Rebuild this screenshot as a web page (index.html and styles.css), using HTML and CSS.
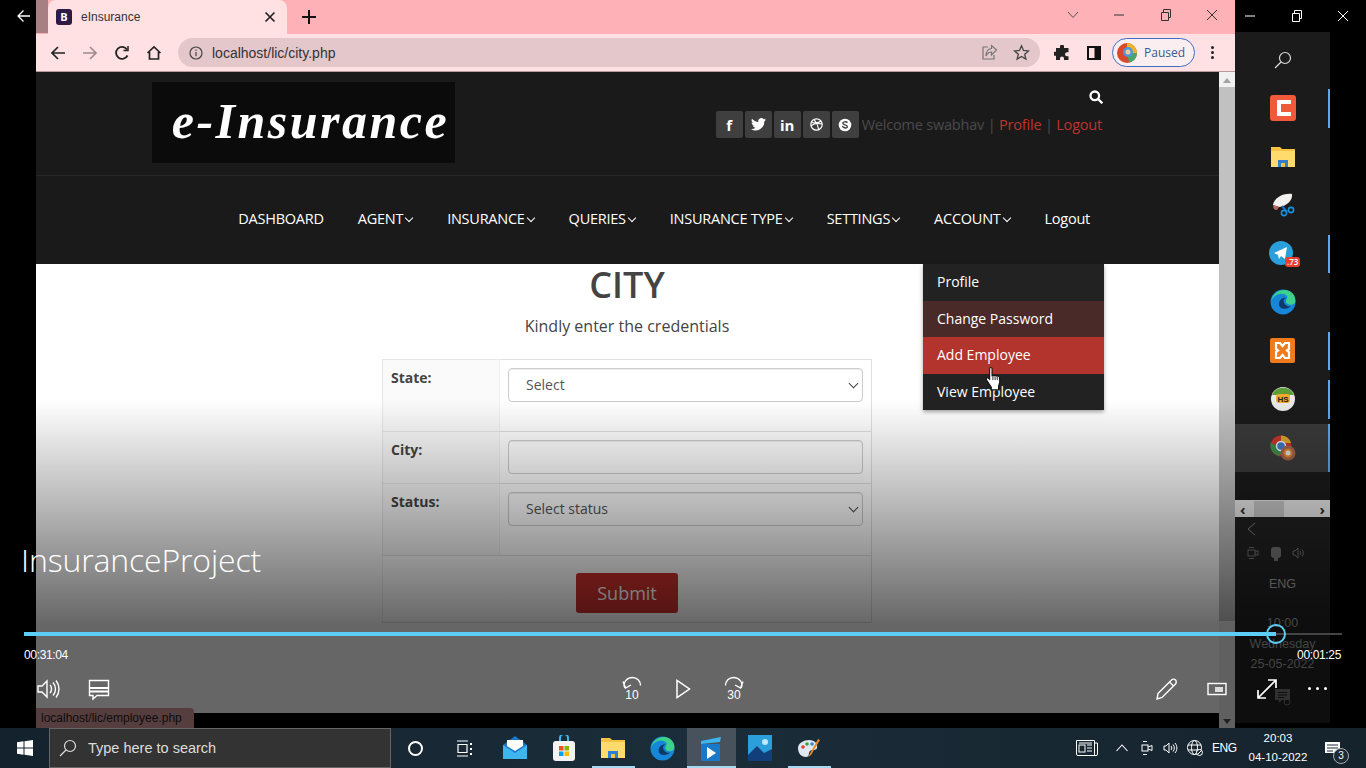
FILE: index.html
```html
<!DOCTYPE html>
<html lang="en">
<head>
  <meta charset="UTF-8">
  <title>eInsurance</title>
  <link rel="stylesheet" href="styles.css">
</head>
<body>
  <div class="screen">
    <div class="gutter">
      <svg class="gutter-back" width="16" height="16" viewBox="0 0 16 16" fill="none" stroke="#fff" stroke-width="1.3"><path d="M14 8H2M7.500 2.500 2 8l5.500 5.500"/></svg>
    </div>

    <div class="browser">
      <div class="tabstrip">
        <div class="tab-edge"></div>
        <div class="tab">
          <span class="favicon">B</span>
          <span class="tab-title">eInsurance</span>
          <svg class="tab-close" width="12" height="12" viewBox="0 0 12 12" stroke="#222" stroke-width="1.700"><path d="M1.500 1.500l9 9M10.500 1.500l-9 9"/></svg>
        </div>
        <svg class="tab-new" width="14" height="14" viewBox="0 0 14 14" stroke="#111" stroke-width="2"><path d="M7 0v14M0 7h14"/></svg>
        <div class="win-btns">
          <svg width="12" height="8" viewBox="0 0 12 8" fill="none" stroke="#555"><path d="M1 1l5 5.500L11 1"/></svg>
          <svg width="12" height="12" viewBox="0 0 12 12" stroke="#333"><path d="M1 6h10"/></svg>
          <svg width="12" height="12" viewBox="0 0 12 12" fill="none" stroke="#333"><path d="M1.500 3.500h7v8h-7zM3.500 3.500V.5h7v8h-2"/></svg>
          <svg width="12" height="12" viewBox="0 0 12 12" stroke="#333"><path d="M1 1l10 10M11 1L1 11"/></svg>
        </div>
      </div>

      <div class="toolbar">
        <svg class="tool" width="16" height="16" viewBox="0 0 16 16" fill="none" stroke="#222" stroke-width="1.700"><path d="M15 8H2M8 2 2 8l6 6"/></svg>
        <svg class="tool" width="16" height="16" viewBox="0 0 16 16" fill="none" stroke="#a08a8c" stroke-width="1.700"><path d="M1 8h13M8 2l6 6-6 6"/></svg>
        <svg class="tool" width="16" height="16" viewBox="0 0 16 16" fill="none" stroke="#222" stroke-width="1.800"><path d="M13.500 10.500A6 6 0 1 1 13 4.500"/><path d="M14 1v4.500H9.500" stroke-width="1.500"/></svg>
        <svg class="tool" width="16" height="16" viewBox="0 0 16 16" fill="none" stroke="#222" stroke-width="1.700"><path d="M1.500 8 8 2l6.500 6M3.500 7v7h9V7"/></svg>
        <div class="omnibox">
          <svg width="14" height="14" viewBox="0 0 14 14" fill="none" stroke="#444" stroke-width="1.200"><circle cx="7" cy="7" r="6"/><path d="M7 6v4.200M7 3.500v1.200"/></svg>
          <span class="url">localhost/lic/city.php</span>
          <svg class="omni-share" width="17" height="17" viewBox="0 0 17 17" fill="none" stroke="#777" stroke-width="1.200"><path d="M7 3H2v12h11v-4"/><path d="M15.500 6 10.500 1.500v3C7 5 5 8 5 12c1.500-3 3-4 5.500-4v3z"/></svg>
          <svg width="17" height="17" viewBox="0 0 17 17" fill="none" stroke="#444" stroke-width="1.300"><path d="M8.500 1.800l2 4.600 5 .5-3.800 3.300 1.200 4.900-4.400-2.600-4.400 2.600 1.200-4.900L1.500 6.900l5-.5z"/></svg>
        </div>
        <svg class="ext" width="16" height="16" viewBox="0 0 16 16" fill="#222"><path d="M6 1.500a2 2 0 0 1 4 0V3h4.500v4.300H13a2 2 0 0 0 0 4h1.500V15H10v-1.500a2 2 0 0 0-4 0V15H2v-4.200H.8a2 2 0 0 1 0-4H2V3h4z"/></svg>
        <svg class="sidepanel" width="14" height="14" viewBox="0 0 14 14"><path fill="#111" d="M0 0h14v14H0z"/><path fill="#ffe0e3" d="M2 2h5.500v10H2z"/></svg>
        <div class="profile-pill">
          <svg width="20" height="20" viewBox="0 0 20 20"><circle cx="10" cy="10" r="10" fill="#d9482b"/><path d="M10 0a10 10 0 0 1 10 10H10z" fill="#f0b429"/><path d="M20 10a10 10 0 0 1-8 9.800L10 10z" fill="#4aa56a"/><circle cx="11" cy="9" r="5" fill="#4b9bd6"/><circle cx="11" cy="9" r="2.500" fill="#f3c9a0"/></svg>
          <span>Paused</span>
        </div>
        <div class="kebab"><i></i><i></i><i></i></div>
      </div>

      <div class="viewport">
        <div class="page">
          <header class="site-top">
            <div class="logo">e-Insurance</div>
            <div class="top-right">
              <svg class="site-search" width="14" height="14" viewBox="0 0 14 14" fill="none" stroke="#fff" stroke-width="2.300"><circle cx="5.800" cy="5.800" r="4.300"/><path d="M9 9l4.300 4.300"/></svg>
              <div class="top-links">
                <a class="social">f</a>
                <a class="social">
                  <svg width="15" height="13" viewBox="0 0 15 13" fill="#fff"><path d="M15 1.600c-.6.300-1.200.4-1.800.5.600-.4 1.100-1 1.400-1.700-.6.400-1.300.6-2 .8a3 3 0 0 0-5.200 2.800C4.900 3.900 2.600 2.700 1 .8.200 2.200.6 4 2 4.900c-.5 0-1-.2-1.400-.4 0 1.500 1 2.800 2.500 3.100-.5.100-.9.100-1.400 0 .4 1.200 1.500 2.100 2.900 2.100A6 6 0 0 1 0 11a8.600 8.600 0 0 0 13.300-7.600c.6-.5 1.200-1.100 1.700-1.800z"/></svg>
                </a>
                <a class="social">in</a>
                <a class="social">
                  <svg width="13" height="13" viewBox="0 0 13 13" fill="none" stroke="#fff" stroke-width="1.200"><circle cx="6.500" cy="6.500" r="5.700"/><path d="M1.500 4.500c4 .8 7.500.3 9.500-1.500M4 1.300c2.500 3 4.200 6.500 4.800 10.500M1 7.800c3-2.500 7-3 11-1.800"/></svg>
                </a>
                <a class="social">
                  <svg width="14" height="14" viewBox="0 0 14 14"><circle cx="7" cy="7" r="6.300" fill="#fff"/><path d="M9.500 4.600C8 3.300 4.800 3.600 4.800 5.300c0 2 4.500 1.300 4.500 3.400 0 1.800-3.500 2-5-.5" fill="none" stroke="#3e3e3e" stroke-width="1.400"/></svg>
                </a>
                <span class="welcome">Welcome swabhav <span class="sep">|</span> <a class="red-link">Profile</a> <span class="sep">|</span> <a class="red-link">Logout</a></span>
              </div>
            </div>
          </header>

          <nav class="site-nav">
            <a class="nav-item">DASHBOARD</a>
            <a class="nav-item caret">AGENT</a>
            <a class="nav-item caret">INSURANCE</a>
            <a class="nav-item caret">QUERIES</a>
            <a class="nav-item caret">INSURANCE TYPE</a>
            <a class="nav-item caret">SETTINGS</a>
            <a class="nav-item caret">ACCOUNT</a>
            <a class="nav-item">Logout</a>
          </nav>

          <main class="content">
            <h1>CITY</h1>
            <p class="lead">Kindly enter the credentials</p>
            <table class="form-table">
              <tr class="row-state">
                <th>State:</th>
                <td><div class="field select">Select</div></td>
              </tr>
              <tr class="row-city">
                <th>City:</th>
                <td><div class="field"></div></td>
              </tr>
              <tr class="row-state">
                <th>Status:</th>
                <td><div class="field select">Select status</div></td>
              </tr>
              <tr>
                <td class="submit-cell" colspan="2"><button class="submit">Submit</button></td>
              </tr>
            </table>
          </main>

          <ul class="dropdown">
            <li>Profile</li>
            <li class="dd-visited">Change Password</li>
            <li class="dd-hover">Add Employee</li>
            <li>View Employee</li>
          </ul>
          <svg class="hand" width="18" height="24" viewBox="0 0 16 22"><path d="M4 1.500c0-1.300 2.200-1.300 2.200 0V8l.8-.3c.8-.3 1.500-.1 1.800.4.800-.4 1.600-.2 1.900.4.900-.4 2-.1 2.200.8.600 2.300.5 5.800-.7 8.200v3.500H5.500v-2.500L1.200 12C.3 10.900 1.600 9.300 2.800 10.200L4 11.300z" fill="#fff" stroke="#111" stroke-width="1"/><path d="M7 8v4M9 8.500V12M11 9v3" stroke="#111" stroke-width=".8"/></svg>

          <div class="page-foot"></div>
          <div class="status-tip">localhost/lic/employee.php</div>
        </div>
        <div class="scrollbar">
          <span class="arrow-up"></span>
          <div class="thumb"></div>
          <span class="arrow-down"></span>
        </div>
      </div>
    </div>

    <aside class="dock">
      <div class="dock-winbar">
        <svg width="12" height="12" viewBox="0 0 12 12" stroke="#fff"><path d="M1 6h10"/></svg>
        <svg width="12" height="12" viewBox="0 0 12 12" fill="none" stroke="#fff"><path d="M1.500 3.500h7v8h-7zM3.500 3.500V.5h7v8h-2"/></svg>
        <svg width="12" height="12" viewBox="0 0 12 12" stroke="#fff"><path d="M1 1l10 10M11 1L1 11"/></svg>
      </div>
      <div class="dock-body">
        <div class="dock-slot search-slot">
          <svg width="18" height="18" viewBox="0 0 18 18" fill="none" stroke="#ddd" stroke-width="1.200"><circle cx="11" cy="7" r="5.500"/><path d="M7 11l-6 6"/></svg>
        </div>
        <div class="dock-slot marked">
          <svg width="26" height="26" viewBox="0 0 26 26"><rect width="26" height="26" rx="3" fill="#f0593a"/><path d="M21 7H9v12h12" fill="none" stroke="#fff" stroke-width="4"/></svg>
        </div>
        <div class="dock-slot">
          <svg width="24" height="20" viewBox="0 0 24 20"><path d="M0 0h9l2 2h13v18H0z" fill="#f5c342"/><path d="M0 4h24v16H0z" fill="#ffdb6e"/><path d="M7 13h10v7H7z" fill="#2f7fd1"/><path d="M10 16h4v4h-4z" fill="#f5c342"/></svg>
        </div>
        <div class="dock-slot">
          <svg width="24" height="24" viewBox="0 0 24 24"><path d="M2 12C3 5 12 0 21 1c1 6-5 12-13 13z" fill="#f3f0f0"/><path d="M2 12l6 2-2 3c-3 0-4-2-4-5z" fill="#b66"/><path d="M11 13l5 6" stroke="#1b6fb8" stroke-width="2"/><circle cx="13" cy="20" r="2.600" fill="none" stroke="#1b8fd8" stroke-width="1.600"/><circle cx="20" cy="17" r="2.600" fill="none" stroke="#1b8fd8" stroke-width="1.600"/></svg>
        </div>
        <div class="dock-slot marked">
          <svg width="28" height="26" viewBox="0 0 28 26"><circle cx="12" cy="12" r="12" fill="#2a9fdc"/><path d="M5 12l13-6-2 12-4-3-2 3-1-4z" fill="#fff"/></svg>
          <span class="dock-badge">.73</span>
        </div>
        <div class="dock-slot">
          <svg width="26" height="26" viewBox="0 0 26 26"><circle cx="13" cy="13" r="12.500" fill="#1686d9"/><path d="M1 12C3 3 13-2 21 3c4 3 5 7 4 11-3 3-8 2-9-1 0-3 2-4 1-6C13 3 5 4 1 12z" fill="#3dd28c"/><path d="M9 15c0-4 4-7 7-6-3 1-3 4-1 6 1 2 4 3 6 2-3 4-12 4-12-2z" fill="#0c3a6a"/></svg>
        </div>
        <div class="dock-slot marked">
          <svg width="25" height="25" viewBox="0 0 25 25"><rect width="25" height="25" rx="2" fill="#f07b1c"/><path d="M6 5h4l2.500 3L15 5h4v6l-2 1.500 2 1.500v6h-4l-2.500-3-2.500 3H6v-6l2-1.500L6 11z" fill="none" stroke="#fff" stroke-width="2.200"/></svg>
        </div>
        <div class="dock-slot marked">
          <svg width="24" height="24" viewBox="0 0 24 24"><circle cx="12" cy="12" r="12" fill="#e8e8e8"/><path d="M1 8a12 12 0 0 1 22 0z" fill="#5a9e35"/><rect x="5" y="7" width="14" height="9" rx="3" fill="#f0a928"/><text class="hs-mark" x="12" y="14.500" text-anchor="middle">HS</text></svg>
        </div>
        <div class="dock-slot dock-active marked">
          <svg width="26" height="26" viewBox="0 0 26 26"><circle cx="11" cy="11" r="10.500" fill="#c9352b"/><path d="M11 .5A10.500 10.500 0 0 1 21 8H11z" fill="#d9a62a"/><path d="M.8 8a10.500 10.500 0 0 0 9 13L14 13z" fill="#3a8c4a"/><circle cx="11" cy="11" r="4.500" fill="#3c78c8" stroke="#eee" stroke-width="1.400"/><circle cx="18" cy="18" r="7.500" fill="#a0614a"/><circle cx="18" cy="18" r="4.500" fill="#d9822b"/><circle cx="18" cy="18" r="2.500" fill="#ddd"/></svg>
        </div>
        <div class="dock-gap"></div>
        <div class="dock-scroll">
          <span class="chev">‹</span>
          <span class="dock-scroll-thumb"></span>
          <span class="chev">›</span>
        </div>
        <div class="tray">
          <svg class="tray-back" width="9" height="14" viewBox="0 0 9 14" fill="none" stroke="#888"><path d="M8 1 1 7l7 6"/></svg>
          <div class="tray-icons">
            <svg width="14" height="14" viewBox="0 0 14 14" fill="none" stroke="#777"><rect x="2" y="4" width="7" height="6"/><path d="M9 6l3-1.500v5L9 8M3 1.500h5M3 12.500h5"/></svg>
            <svg width="14" height="16" viewBox="0 0 14 16" fill="#777"><rect x="2" y="1" width="10" height="11" rx="3"/><rect x="5" y="12" width="4" height="3"/></svg>
            <svg width="14" height="14" viewBox="0 0 14 14" fill="none" stroke="#777"><path d="M1 5v4h2l3 3V2L3 5zM8 5c1 1 1 3 0 4M10 3.500c1.800 2 1.800 5 0 7"/></svg>
          </div>
          <div class="tray-lang">ENG</div>
          <div class="tray-time">10:00</div>
          <div class="tray-date">Wednesday</div>
          <div class="tray-date">25-05-2022</div>
          <svg class="tray-note" width="18" height="18" viewBox="0 0 18 18"><path d="M1 1h15v11H8l-3 3v-3H1z" fill="#777"/><path d="M4 4.500h9M4 7h9M4 9.500h6" stroke="#222"/><circle cx="13" cy="14" r="3" fill="none" stroke="#777"/></svg>
        </div>
      </div>
    </aside>
    <div class="gutter"></div>

    <div class="player">
      <div class="player-title">InsuranceProject</div>
      <div class="progress">
        <div class="progress-fill"></div>
        <span class="progress-thumb"></span>
      </div>
      <div class="times"><span>00:31:04</span><span>00:01:25</span></div>
      <div class="controls">
        <div class="ctrl-group left-group">
          <svg width="24" height="24" viewBox="0 0 24 24" fill="none" stroke="#fff" stroke-width="1.400"><path d="M2 9v6h4l5 5V4L6 9zM14 8c2 2 2 6 0 8M17 5.500c3.300 3.500 3.300 9.500 0 13M20 3.500c4 5 4 12 0 17"/></svg>
          <svg width="24" height="24" viewBox="0 0 24 24" fill="none" stroke="#fff" stroke-width="1.400"><path d="M2.500 3.500h19v15H10l-4 3.500v-3.500H2.500z"/><path d="M3 11h18M3 14.500h18" stroke-width="1.800"/></svg>
        </div>
        <div class="ctrl-group mid-group">
          <div class="skip">
            <svg width="24" height="14" viewBox="0 0 24 14" fill="none" stroke="#fff" stroke-width="1.400"><path d="M5 12C2 7 7 1.500 12.500 1.500c4.500 0 8 3.500 8 8M3 5.500l2.500 6.500 5.500-3"/></svg>
            <span>10</span>
          </div>
          <svg width="24" height="24" viewBox="0 0 24 24" fill="none" stroke="#fff" stroke-width="1.500"><path d="M6 3.500v17L18.500 12z"/></svg>
          <div class="skip">
            <svg width="24" height="14" viewBox="0 0 24 14" fill="none" stroke="#fff" stroke-width="1.400"><path d="M19 12c3-5-2-10.500-7.500-10.500-4.500 0-8 3.500-8 8M21 5.500 18.500 12 13 9"/></svg>
            <span>30</span>
          </div>
        </div>
        <div class="ctrl-group right-group">
          <svg width="24" height="24" viewBox="0 0 24 24" fill="none" stroke="#fff" stroke-width="1.400"><path d="M3 16.500 16.500 3c1-1 3-1 4 0s1 3 0 4L7 20.500 2 22zM14.500 5l4.500 4.500"/></svg>
          <svg width="24" height="24" viewBox="0 0 24 24" fill="none" stroke="#fff"><rect x="3" y="6.500" width="18" height="11" stroke-width="1.400"/><rect x="10" y="10" width="8" height="5" fill="#ddd" stroke="none"/></svg>
          <svg width="24" height="24" viewBox="0 0 24 24" fill="none" stroke="#fff" stroke-width="1.700"><path d="M3.500 20.500l17-17M13 3h8v8M3 13v8h8"/></svg>
          <div class="dots"><i></i><i></i><i></i></div>
        </div>
      </div>
    </div>
  </div>

  <footer class="taskbar">
    <div class="task-slot start">
      <svg width="16" height="16" viewBox="0 0 16 16" fill="#fff"><path d="M0 2.300 6.500 1.300v6.300H0zM7.500 1.200 16 0v7.600H7.500zM0 8.500h6.500v6.200L0 13.700zM7.500 8.500H16V16l-8.500-1.200z"/></svg>
    </div>
    <div class="task-search">
      <svg width="18" height="18" viewBox="0 0 18 18" fill="none" stroke="#ddd" stroke-width="1.200"><circle cx="11" cy="7" r="5.500"/><path d="M7 11l-6 6"/></svg>
      <span>Type here to search</span>
    </div>
    <div class="task-slot cortana"><span class="ring"></span></div>
    <div class="task-slot">
      <svg width="17" height="17" viewBox="0 0 17 17" fill="none" stroke="#fff" stroke-width="1.200"><path d="M1 1h11M1 16h11M2 4.500h9v8H2z"/><path d="M15 3v2M15 8v2M15 13v2" stroke-width="2"/></svg>
    </div>
    <div class="task-slot mail">
      <svg width="24" height="24" viewBox="0 0 24 24"><path d="M12 0l12 9v14H0V9z" fill="#1a78c8"/><path d="M0 9l12 8 12-8v14H0z" fill="#3db5ee"/><path d="M4 4h16v6l-8 5-8-5z" fill="#fff"/></svg>
    </div>
    <div class="task-slot">
      <svg width="22" height="26" viewBox="0 0 22 26"><path d="M7 7V3a4 4 0 0 1 8 0v4" fill="none" stroke="#3db5ee" stroke-width="2"/><rect y="6" width="22" height="20" rx="3" fill="#f3f3f3"/><path d="M6 11h4.500v4.500H6z" fill="#f25022"/><path d="M11.500 11H16v4.500h-4.500z" fill="#7fba00"/><path d="M6 16.500h4.500V21H6z" fill="#00a4ef"/><path d="M11.500 16.500H16V21h-4.500z" fill="#ffb900"/></svg>
    </div>
    <div class="task-slot used">
      <svg width="24" height="20" viewBox="0 0 24 20"><path d="M0 0h9l2 2h13v18H0z" fill="#f5c342"/><path d="M0 4h24v16H0z" fill="#ffdb6e"/><path d="M7 13h10v7H7z" fill="#2f7fd1"/><path d="M10 16h4v4h-4z" fill="#f5c342"/></svg>
    </div>
    <div class="task-slot">
      <svg width="25" height="25" viewBox="0 0 26 26"><circle cx="13" cy="13" r="12.500" fill="#1686d9"/><path d="M1 12C3 3 13-2 21 3c4 3 5 7 4 11-3 3-8 2-9-1 0-3 2-4 1-6C13 3 5 4 1 12z" fill="#3dd28c"/><path d="M9 15c0-4 4-7 7-6-3 1-3 4-1 6 1 2 4 3 6 2-3 4-12 4-12-2z" fill="#0c3a6a"/></svg>
    </div>
    <div class="task-slot task-active">
      <svg width="26" height="26" viewBox="0 0 26 26"><path d="M3 6l20-4-1 5-19 2z" fill="#3db5ee"/><path d="M3 9h19v17H3z" fill="#1a78c8"/><path d="M9 12l9 6-9 6z" fill="#fff"/></svg>
    </div>
    <div class="task-slot">
      <svg width="24" height="26" viewBox="0 0 24 26"><path d="M0 0h24v26H0z" fill="#2a9fdc"/><circle cx="17" cy="7" r="3" fill="#bfe9ff"/><path d="M0 20l9-9 7 7 8-4v12H0z" fill="#123f7a"/></svg>
    </div>
    <div class="task-slot used">
      <svg width="24" height="24" viewBox="0 0 24 24"><path d="M1 12c0-5 6-8 11-8 6 0 9 4 8 8-1 3-5 1-7 3s0 6-4 6c-5 0-8-4-8-9z" fill="#dfe8f0"/><circle cx="6" cy="11" r="1.800" fill="#e33"/><circle cx="10" cy="8" r="1.800" fill="#3a3"/><circle cx="15" cy="8" r="1.800" fill="#38c"/><path d="M11 21 21 3l2 1-9 15z" fill="#e98a2b"/></svg>
    </div>

    <div class="sys-tray">
      <svg class="news" width="22" height="16" viewBox="0 0 22 16" fill="none" stroke="#fff"><path d="M.5.500h18v15H2a1.500 1.500 0 0 1-1.500-1.500zM18.500 3h3v11a1.500 1.500 0 0 1-1.500 1.500h-2"/><rect x="3" y="5" width="6" height="7"/><path d="M3 3h13M11 5h5M11 8h5M11 11h5"/></svg>
      <svg class="sys-chevron" width="12" height="8" viewBox="0 0 12 8" fill="none" stroke="#fff" stroke-width="1.100"><path d="M.5 7 6 1l5.500 6"/></svg>
      <svg class="sys-cam" width="12" height="16" viewBox="0 0 12 16" fill="none" stroke="#fff"><rect x="1" y="5" width="6" height="6"/><path d="M7 7l4-1.500v5L7 9M2 1.500h4M2 14.500h4"/></svg>
      <svg class="sys-ic" width="15" height="14" viewBox="0 0 15 14" fill="none" stroke="#fff"><path d="M1 5v4h2l3 3V2L3 5zM8 5c1 1 1 3 0 4M10 3.500c1.800 2 1.800 5 0 7M12 2c2.500 3 2.500 7 0 10"/></svg>
      <svg class="sys-ic" width="16" height="16" viewBox="0 0 16 16" fill="none" stroke="#fff"><circle cx="7.500" cy="7.500" r="7"/><ellipse cx="7.500" cy="7.500" rx="3" ry="7"/><path d="M1 5h13M1 10h13"/><circle cx="12.500" cy="12.500" r="3" fill="#1b2a35"/><path d="M10.500 14.500l4-4"/></svg>
      <span class="sys-lang">ENG</span>
      <div class="clock"><div>20:03</div><div>04-10-2022</div></div>
      <div class="notify">
        <svg width="15" height="13" viewBox="0 0 15 13"><path d="M0 0h15v11H0z" fill="#fff"/><path d="M2 3h11M2 6h11M2 9h6" stroke="#1b2a35"/></svg>
        <span class="notify-count">3</span>
      </div>
    </div>
  </footer>
</body>
</html>
```

FILE: styles.css
```css
* {
  box-sizing: border-box;
}
html, body {
  margin: 0;
  width: 1366px;
  height: 768px;
  overflow: hidden;
  background: #000;
  font-family: "Open Sans", "Noto Sans", sans-serif;
}
svg {
  display: block;
  flex: none;
}
.screen {
  position: relative;
  display: flex;
  height: 728px;
}
.gutter {
  width: 36px;
  background: #000;
  flex: none;
}
.gutter-back {
  margin: 8px 0 0 16px;
}

/* browser */
.browser {
  width: 1199px;
  display: flex;
  flex-direction: column;
  flex: none;
}
.tabstrip {
  height: 34px;
  background: #ffb1b8;
  display: flex;
  align-items: flex-end;
  flex: none;
}
.tab-edge {
  width: 12px;
  height: 33px;
  margin-bottom: 1px;
  background: #a88084;
  align-self: flex-start;
}
.tab {
  width: 239px;
  height: 34px;
  background: #ffe0e3;
  border-radius: 8px 8px 0 0;
  display: flex;
  align-items: center;
  padding-left: 8px;
  font-size: 12px;
  color: #333;
}
.favicon {
  width: 16px;
  height: 16px;
  border-radius: 3px;
  background: #2d1b45;
  color: #fff;
  font-size: 11px;
  font-weight: 700;
  text-align: center;
  line-height: 16px;
}
.tab-title {
  margin-left: 9px;
  font-family: "Liberation Sans", sans-serif;
}
.tab-close {
  margin-left: auto;
  margin-right: 11px;
}
.tab-new {
  margin: 0 0 10px 15px;
}
.win-btns {
  margin-left: auto;
  height: 30px;
  align-self: flex-start;
  display: flex;
  align-items: center;
  gap: 34.500px;
  padding-right: 17px;
}
.toolbar {
  height: 38px;
  background: #ffe0e3;
  border-bottom: 1px solid #b49a9d;
  display: flex;
  align-items: center;
  flex: none;
  padding-left: 14px;
}
.tool {
  margin-right: 16px;
}
.omnibox {
  width: 862px;
  height: 29px;
  margin-left: 0;
  border-radius: 15px;
  background: #e3c7ca;
  display: flex;
  align-items: center;
  padding: 0 10px 0 11px;
}
.url {
  margin-left: 9px;
  font-size: 14px;
  color: #333;
  font-family: "Liberation Sans", sans-serif;
}
.omni-share {
  margin-left: auto;
  margin-right: 15px;
}
.ext {
  margin-left: 14px;
}
.sidepanel {
  margin-left: 17px;
}
.profile-pill {
  width: 83px;
  height: 29px;
  margin-left: 11px;
  border: 1.500px solid #3b6fc4;
  border-radius: 15px;
  display: flex;
  align-items: center;
  gap: 7px;
  padding-left: 4px;
  font-size: 12px;
  color: #3a5a8c;
  background: #fbeef0;
}
.kebab {
  margin-left: 16px;
  display: flex;
  flex-direction: column;
  gap: 2px;
}
.kebab i {
  width: 3px;
  height: 3px;
  border-radius: 50%;
  background: #222;
}
.viewport {
  flex: 1;
  display: flex;
  min-height: 0;
}
.page {
  position: relative;
  flex: 1;
  background: #fff;
  display: flex;
  flex-direction: column;
}
.scrollbar {
  width: 16px;
  background: #f1f1f1;
  display: flex;
  flex-direction: column;
  align-items: center;
}
.arrow-up, .arrow-down {
  width: 0;
  height: 0;
  border-left: 4px solid transparent;
  border-right: 4px solid transparent;
}
.arrow-up {
  margin: 6px 0 4px;
  border-bottom: 5px solid #a3a3a3;
}
.arrow-down {
  margin: auto 0 4px;
  border-top: 5px solid #505050;
}
.thumb {
  width: 100%;
  height: 534px;
  margin-top: 0;
  background: #c1c1c1;
}

/* site header */
.site-top {
  height: 104px;
  background: #1a1a1a;
  border-bottom: 1px solid #252525;
  display: flex;
  justify-content: space-between;
  padding: 10px 117px 0 116px;
  flex: none;
}
.logo {
  width: 303px;
  height: 81px;
  padding-left: 14px;
  background: #0b0b0b;
  color: #fff;
  font-family: "Liberation Serif", serif;
  font-style: italic;
  font-weight: 700;
  font-size: 50px;
  line-height: 78px;
  text-align: center;
  letter-spacing: 2.500px;
}
.top-right {
  display: flex;
  flex-direction: column;
  align-items: flex-end;
}
.site-search {
  margin: 8px -1px 7px 0;
}
.top-links {
  display: flex;
  align-items: center;
  gap: 2px;
}
.social {
  width: 27px;
  height: 27px;
  background: #3f3f3f;
  border-radius: 2px;
  color: #fff;
  font-size: 15px;
  font-weight: 700;
  display: flex;
  align-items: center;
  justify-content: center;
}
.welcome {
  margin-left: 1px;
  font-size: 14.500px;
  letter-spacing: -.2px;
  color: #4a4a4a;
}
.sep {
  color: #4a4a4a;
}
.red-link {
  color: #c0332a;
}
.site-nav {
  height: 88px;
  background: #1a1a1a;
  display: flex;
  align-items: center;
  justify-content: flex-end;
  gap: 34px;
  padding: 0 129px 4px 0;
  flex: none;
  font-size: 14.500px;
  letter-spacing: -.25px;
  color: #fff;
}
.caret::after {
  content: "";
  display: inline-block;
  width: 5px;
  height: 5px;
  margin: 0 1px 3px 3px;
  border-right: 1.300px solid #fff;
  border-bottom: 1.300px solid #fff;
  transform: rotate(45deg);
}

/* form */
.content {
  flex: 1;
  padding-right: 1px;
  text-align: center;
  color: #444;
}
h1 {
  margin: 0;
  font-size: 36px;
  font-weight: 600;
  line-height: 42px;
}
.lead {
  margin: 9px 0 22px;
  font-size: 16px;
  line-height: 22px;
}
.form-table {
  width: 490px;
  margin: 0 auto;
  border-collapse: collapse;
  border: 1px solid #ddd;
  text-align: left;
  font-size: 14px;
}
.form-table th {
  width: 117px;
  padding: 8px;
  vertical-align: top;
  background: #fafafa;
  border: 1px solid #e6e6e6;
  border-right-color: #f0f0f0;
  font-weight: 700;
  color: #444;
}
.form-table td {
  padding: 8px;
  vertical-align: top;
  border: 1px solid #e0e0e0;
  border-left-color: #f0f0f0;
}
.row-state {
  height: 72px;
}
.row-city {
  height: 52px;
}
.field {
  height: 34px;
  border: 1px solid #ccc;
  border-radius: 4px;
  background: #fff;
  padding-left: 17px;
  font-size: 14px;
  line-height: 32px;
  color: #555;
  box-shadow: inset 0 1px 1px rgba(0, 0, 0, .08);
}
.select {
  position: relative;
}
.select::after {
  content: "";
  position: absolute;
  right: 5px;
  top: 11px;
  width: 6px;
  height: 6px;
  border-right: 1.500px solid #444;
  border-bottom: 1.500px solid #444;
  transform: rotate(45deg);
}
.form-table .submit-cell {
  height: 67px;
  text-align: center;
  padding: 17px 0 0;
}
.submit {
  display: block;
  width: 102px;
  height: 40px;
  margin: 0 auto;
  border: 0;
  border-radius: 3px;
  background: #c9302c;
  color: #fff;
  font-family: inherit;
  font-size: 18px;
}
.dropdown {
  position: absolute;
  left: 887px;
  top: 192px;
  width: 181px;
  margin: 0;
  padding: 0;
  list-style: none;
  background: #222;
  box-shadow: 0 2px 4px rgba(0, 0, 0, .35);
  color: #fff;
  font-size: 14px;
}
.dropdown li {
  height: 36.500px;
  line-height: 36.500px;
  padding-left: 14px;
}
.dropdown .dd-visited {
  background: #4a2a28;
}
.dropdown .dd-hover {
  background: #b2342c;
}
.hand {
  position: absolute;
  left: 949px;
  top: 295px;
}
.page-foot {
  height: 15px;
  background: #000;
  flex: none;
}
.status-tip {
  position: absolute;
  left: 0;
  bottom: 0;
  height: 20px;
  width: 158px;
  padding-left: 5px;
  background: #d79a9e;
  border-radius: 0 4px 0 0;
  font-size: 12px;
  line-height: 20px;
  color: #222;
  font-family: "Liberation Sans", sans-serif;
  z-index: 3;
}

/* right-hand dock */
.dock {
  width: 95px;
  flex: none;
  display: flex;
  flex-direction: column;
}
.dock-winbar {
  height: 32px;
  background: #000;
  display: flex;
  align-items: center;
  justify-content: flex-end;
  gap: 34.500px;
  margin-right: -36px;
  padding-right: 17px;
  position: relative;
}
.dock-body {
  flex: 1;
  background: #1b1b1b;
  display: flex;
  flex-direction: column;
  border-bottom: 5px solid #000;
}
.dock-slot {
  position: relative;
  height: 48.500px;
  display: flex;
  align-items: center;
  justify-content: center;
  flex: none;
}
.search-slot {
  height: 52px;
  padding-top: 4px;
}
.marked::after {
  content: "";
  position: absolute;
  right: 0;
  top: 5px;
  bottom: 5px;
  width: 2px;
  background: #5aa9ee;
}
.dock-active {
  background: #3a3a3a;
}
.dock-active.marked::after {
  top: 0;
  bottom: 0;
}
.dock-badge {
  position: absolute;
  left: 50px;
  top: 27px;
  padding: 0 2px;
  background: #e8402f;
  border-radius: 3px;
  color: #fff;
  font-size: 8px;
  font-weight: 600;
  line-height: 10px;
}
.dock-gap {
  height: 28px;
  flex: none;
}
.dock-scroll {
  height: 17px;
  background: #f0f0f0;
  display: flex;
  align-items: center;
  justify-content: space-between;
  padding: 0 5px;
  font-size: 15px;
  font-weight: 700;
  color: #333;
  flex: none;
}
.dock-scroll-thumb {
  width: 30px;
  height: 16px;
  margin-right: 28px;
  background: #cdcdcd;
}
.tray {
  flex: 1;
  position: relative;
  display: flex;
  flex-direction: column;
  align-items: center;
  font-family: "Liberation Sans", sans-serif;
  color: #aaa;
  font-size: 12.500px;
  background: #222;
}
.tray-back {
  align-self: flex-start;
  margin: 5px 0 0 12px;
}
.tray-icons {
  display: flex;
  gap: 9px;
  margin-top: 10px;
  align-self: flex-start;
  margin-left: 11px;
}
.tray-lang {
  margin-top: 15px;
  line-height: 15px;
}
.tray-time {
  margin: 24px 0 2.500px;
  line-height: 15px;
}
.tray-date {
  line-height: 20px;
}
.tray-note {
  position: absolute;
  left: 39px;
  top: 171px;
}

/* video overlay */
.player {
  position: absolute;
  inset: 0;
  padding: 0 24px;
  display: flex;
  flex-direction: column;
  justify-content: flex-end;
  background: linear-gradient(to bottom, transparent 400px, rgba(0, 0, 0, .6) 625px);
  color: #fff;
  z-index: 5;
}
.player-title {
  margin-left: -3px;
  font-size: 32px;
  font-weight: 300;
  letter-spacing: -.15px;
  line-height: 44px;
}
.progress {
  position: relative;
  height: 2px;
  margin-top: 51px;
  background: #444;
}
.progress-fill {
  width: 1252px;
  height: 4px;
  margin-top: -1px;
  background: #5ccdf5;
}
.progress-thumb {
  position: absolute;
  left: 1242px;
  top: -9px;
  width: 20px;
  height: 20px;
  border: 2.500px solid #5ccdf5;
  border-radius: 50%;
}
.times {
  display: flex;
  justify-content: space-between;
  margin-top: 12px;
  padding-right: 1px;
  font-size: 12px;
  letter-spacing: -.35px;
  line-height: 16px;
  font-family: "Liberation Sans", sans-serif;
}
.controls {
  display: grid;
  grid-template-columns: 1fr auto 1fr;
  margin-top: 13px;
  margin-bottom: 28px;
  height: 24px;
  align-items: center;
}
.ctrl-group {
  display: flex;
  align-items: center;
}
.left-group {
  gap: 27px;
  padding-left: 12px;
}
.mid-group {
  gap: 27px;
}
.right-group {
  gap: 26px;
  justify-self: end;
  padding-right: 13px;
}
.skip {
  width: 24px;
  display: flex;
  flex-direction: column;
  align-items: center;
  font-size: 12px;
  line-height: 11px;
  font-family: "Liberation Sans", sans-serif;
}
.dots {
  width: 24px;
  display: flex;
  justify-content: center;
  gap: 5px;
}
.dots i {
  width: 3px;
  height: 3px;
  border-radius: 50%;
  background: #fff;
}

/* windows taskbar */
.taskbar {
  height: 40px;
  background: linear-gradient(to right, #13222c, #1b2d3a 50%, #15232c);
  display: flex;
  align-items: center;
  color: #fff;
  font-family: "Liberation Sans", sans-serif;
}
.task-slot {
  position: relative;
  width: 49px;
  height: 40px;
  display: flex;
  align-items: center;
  justify-content: center;
  flex: none;
}
.start {
  width: 49px;
}
.task-search {
  width: 342px;
  height: 40px;
  background: #333;
  border: 1px solid #666;
  display: flex;
  align-items: center;
  gap: 11px;
  padding-left: 9px;
  font-size: 14.500px;
  color: #ddd;
}
.ring {
  width: 15px;
  height: 15px;
  border: 2px solid #fff;
  border-radius: 50%;
}
.mail {
  margin-left: 1.500px;
}
.used::after, .task-active::after {
  content: "";
  position: absolute;
  left: 3px;
  right: 3px;
  bottom: 0;
  height: 2px;
  background: #a6d8f0;
}
.task-active {
  background: #47525d;
}
.task-active::after {
  left: 0;
  right: 0;
}
.sys-tray {
  margin-left: auto;
  display: flex;
  align-items: center;
  font-size: 12px;
  height: 40px;
}
.sys-chevron {
  margin-left: 18px;
}
.sys-cam {
  margin-left: 13px;
}
.sys-ic {
  margin-left: 9.500px;
}
.sys-lang {
  margin-left: 9px;
  width: 24px;
  font-size: 12px;
  letter-spacing: -.4px;
}
.clock {
  width: 66px;
  margin-left: 9px;
  text-align: center;
  font-size: 11.500px;
  line-height: 19px;
}
.notify {
  position: relative;
  width: 33px;
  margin-left: 5px;
  margin-right: 17px;
  padding-left: 9px;
}
.notify-count {
  position: absolute;
  left: 17px;
  top: 6px;
  width: 16px;
  height: 16px;
  border: 1px solid #aaa;
  border-radius: 50%;
  background: #1b2a35;
  font-size: 10px;
  line-height: 14px;
  text-align: center;
}
.hs-mark {
  font-family: "Liberation Sans", sans-serif;
  font-size: 8px;
  font-weight: 700;
  fill: #222;
}
```
